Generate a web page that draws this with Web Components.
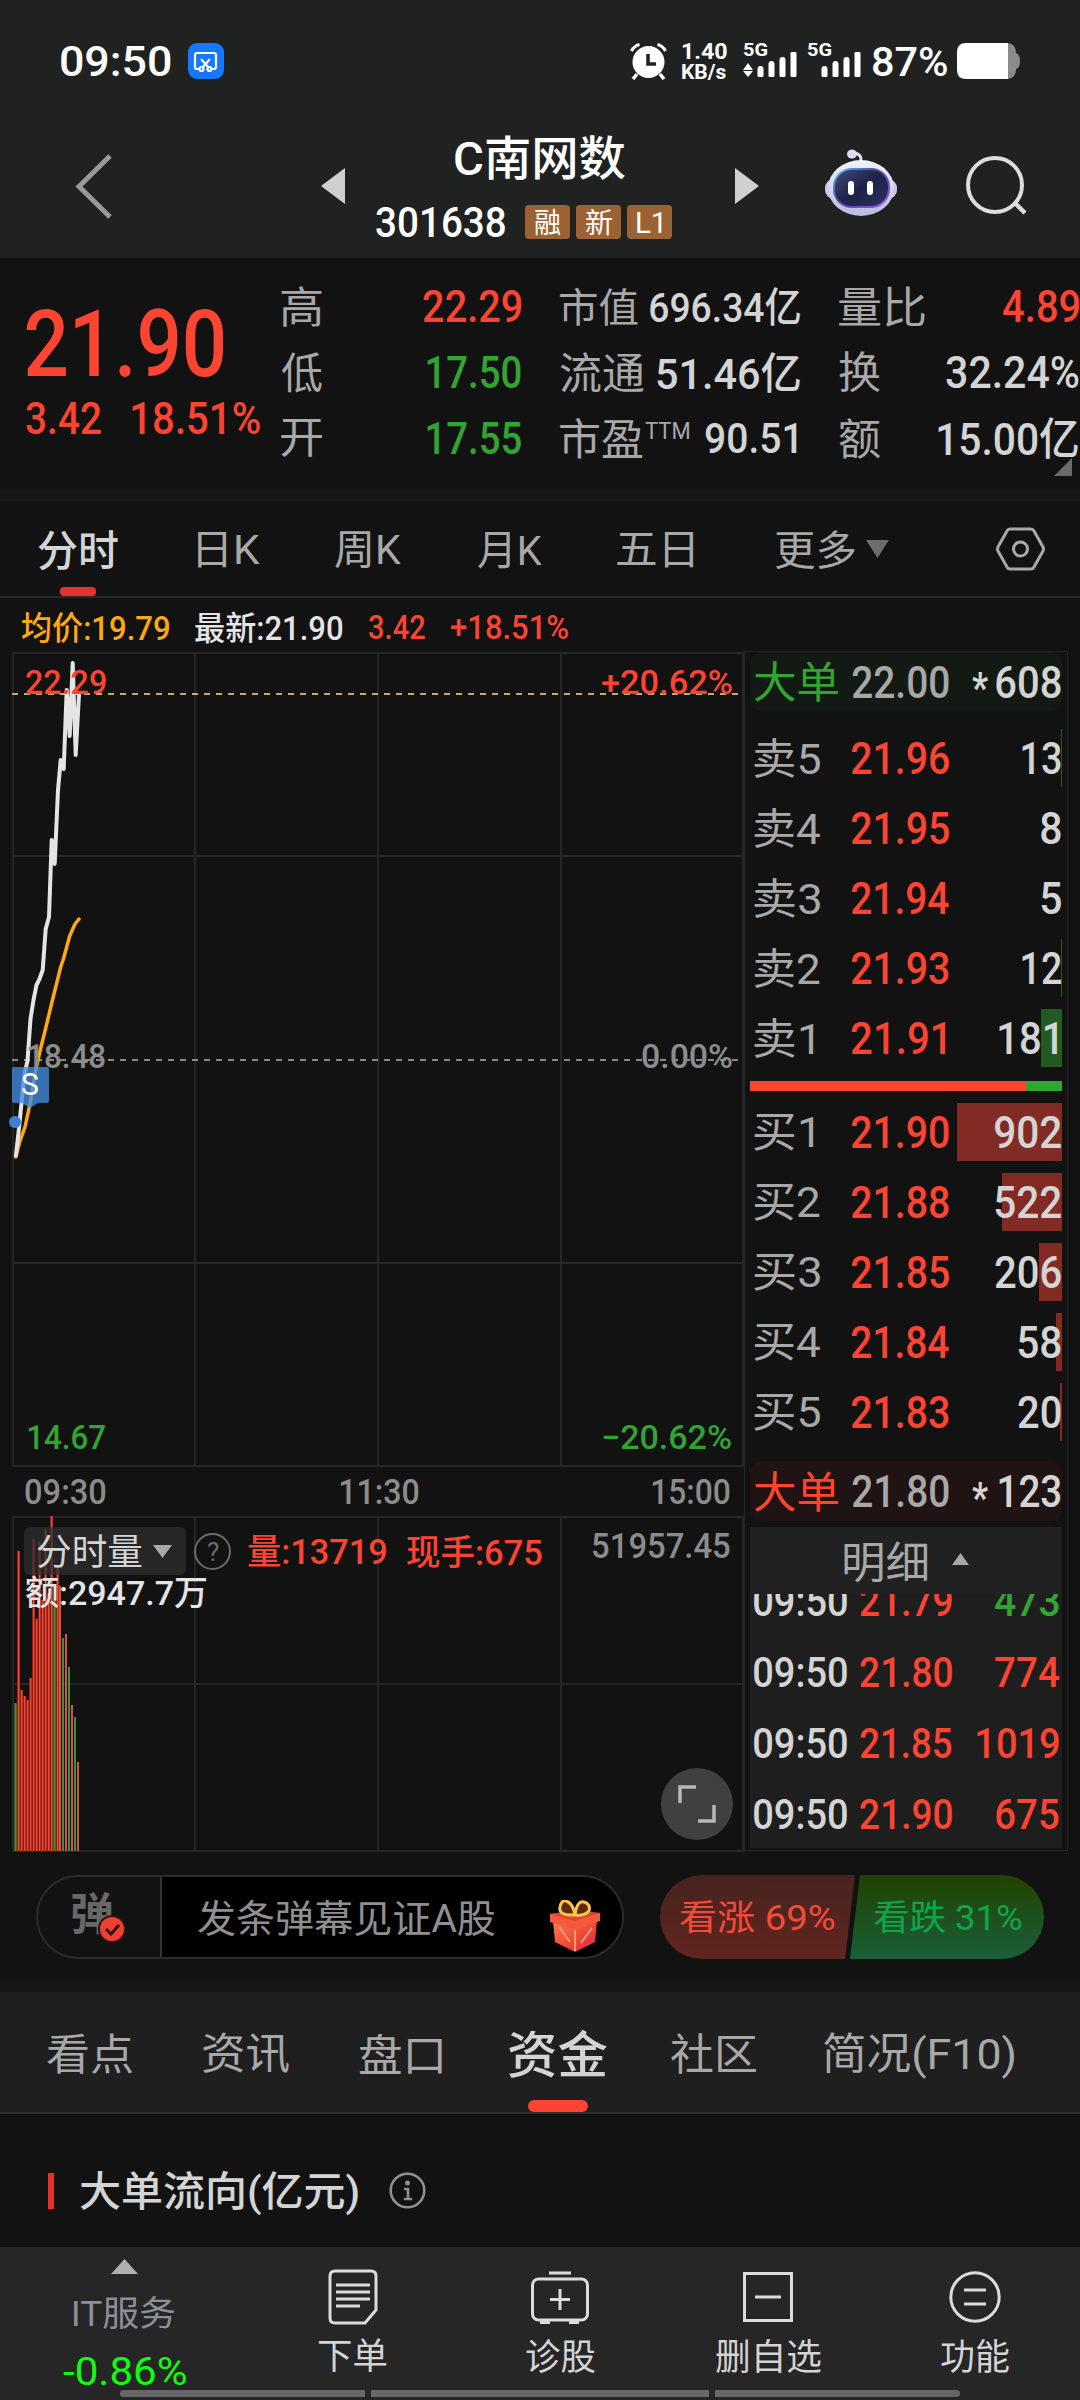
<!DOCTYPE html>
<html lang="zh-CN">
<head>
<meta charset="utf-8">
<title>C南网数 301638</title>
<style>
body {
	margin: 0;
	width: 1080px;
	height: 2400px;
	overflow: hidden;
	background: #121212;
	font-family: Roboto, "Noto Sans CJK SC", sans-serif;
	--red: #fc4432;
	--green: #32a432;
	--grey: #a8a8a8;
	--light: #d4d4d4;
}
</style>
</head>
<body>
<stock-page></stock-page>

<script>
const FONT = 'Roboto, "Noto Sans CJK SC", sans-serif'
const pen = document.createElement('canvas').getContext('2d')

// Shorthand for a fit-text tag: text, ink width, font size, colour, weight, extra style
const t = (text, w, size, color = 'var(--light)', weight = 400, css = '') =>
	`<fit-text text="${text}" w="${w}" size="${size}" weight="${weight}" style="color:${color};${css}"></fit-text>`

const define = (name, html) => {
	customElements.define(name, class extends HTMLElement {
		constructor() {
			super()
			this.attachShadow({mode: 'open'})
			const template = document.createElement('template')
			template.innerHTML = html
			this.shadowRoot.appendChild(template.content.cloneNode(true))
		}
	})
}

// A line of text condensed to an exact width; its box is the ink of the glyphs
class FitText extends HTMLElement {
	constructor() {
		super()
		this.attachShadow({mode: 'open'})
	}

	connectedCallback() {
		const text = this.getAttribute('text')
		const w = +this.getAttribute('w')
		const size = +this.getAttribute('size')
		const weight = this.getAttribute('weight')
		pen.font = `${weight} ${size}px ${FONT}`
		const m = pen.measureText(text)
		const left = -m.actualBoundingBoxLeft
		const inkW = m.actualBoundingBoxRight - left
		const inkH = m.actualBoundingBoxAscent + m.actualBoundingBoxDescent
		this.shadowRoot.innerHTML = `
		<style>
		:host { display: block; flex: none; width: ${w}px; height: ${inkH}px; }
		svg { display: block; overflow: visible; }
		text { font: ${weight} ${size}px ${FONT}; fill: currentColor; white-space: pre; }
		</style>
		<svg width="${w}" height="${inkH}" viewBox="${left} ${-m.actualBoundingBoxAscent} ${inkW} ${inkH}" preserveAspectRatio="none"><text></text></svg>`
		this.shadowRoot.querySelector('text').textContent = text
	}
}
customElements.define('fit-text', FitText)

define('status-bar', `
<style>
:host { display: flex; height: 123px; box-sizing: border-box; padding: 43px 60px 0 61px; }
.left, .right { display: flex; height: 36px; align-items: center; }
.left { gap: 17px; flex: 1; }
.net { display: flex; flex-direction: column; gap: 5px; margin: 0 16px 0 15px; }
.sig { display: flex; flex-direction: column; height: 36px; margin-right: 10px; }
svg { display: block; flex: none; }
</style>
<div class="left">
	${t('09:50', 110, 43, '#fff', 500)}
	<svg width="36" height="36"><rect width="36" height="36" rx="9" fill="#1677ff"/>
		<g fill="none" stroke="#fff" stroke-width="2.2"><path d="M12 26H9q-2 0-2-2V12q0-2 2-2h17q2 0 2 2v12q0 2-2 2h-2"/><path d="M13 16l8 9M22 16l-8 9"/><circle cx="13.500" cy="26" r="2"/><circle cx="21.500" cy="26" r="2"/></g></svg>
</div>
<div class="right">
	<svg width="37" height="37" viewBox="0 0 37 37"><circle cx="18.500" cy="19" r="16" fill="#fff"/><path d="M1.500 8Q4 3 9.500 1.500M35.500 8Q33 3 27.500 1.500" stroke="#fff" stroke-width="3" fill="none"/><path d="M7 31l-4 5M30 31l4 5" stroke="#fff" stroke-width="3.500"/><path d="M18 11v10h8" fill="none" stroke="#1f2221" stroke-width="3.500"/></svg>
	<div class="net">${t('1.40', 45, 22, '#fff', 700)}${t('KB/s', 44, 20, '#fff', 700)}</div>
	<div class="sig">
		${t('5G', 24, 19, '#fff', 700)}
		<svg width="54" height="25" style="margin-top:-4px"><path d="M0 18l5-7 5 7zM0 19h10l-5 6z" fill="#fff"/><path d="M17.500 17v6M28.500 12v11M39.500 8v15M50.500 2v21" stroke="#fff" stroke-width="6" stroke-linecap="round"/></svg>
	</div>
	<div class="sig">
		${t('5G', 24, 19, '#fff', 700)}
		<svg width="56" height="25" style="margin-top:-4px"><path d="M17.500 17v6M28.500 12v11M39.500 8v15M50.500 2v21" stroke="#fff" stroke-width="6" stroke-linecap="round"/></svg>
	</div>
	${t('87%', 74, 40, '#fff', 500)}
	<svg width="63" height="36" style="margin-left:10px"><path d="M9 0h42v36H9q-9 0-9-9V9q0-9 9-9z" fill="#fff"/><path d="M51 0q8 1 8 10q4 1 4 8t-4 8q0 9-8 10z" fill="#8b8b8b"/></svg>
</div>
`)

define('page-header', `
<style>
:host { display: flex; height: 135px; }
svg { display: block; flex: none; }
.title { width: 390px; display: flex; flex-direction: column; align-items: center; padding-top: 12px; }
.sub { display: flex; align-items: center; margin: 25px 32px 0 0; }
.tag { width: 45px; height: 34px; margin-left: 6px; border-radius: 4px; background: #9c6233; display: flex; align-items: center; justify-content: center; }
.tag:nth-of-type(1) { margin-left: 20px; }
</style>
<svg width="345" height="135"><path d="M110 33L79 63.500 110 94" fill="none" stroke="#999" stroke-width="5"/><path d="M345 45v36l-24-18z" fill="#d0d0d0"/></svg>
<div class="title">
	${t('C南网数', 170, 47, '#fff', 500)}
	<div class="sub">
		${t('301638', 129, 42, '#fff', 500)}
		<div class="tag">${t('融', 26, 28, '#fff')}</div>
		<div class="tag">${t('新', 26, 28, '#fff')}</div>
		<div class="tag">${t('L1', 25, 29, '#fff')}</div>
	</div>
</div>
<svg width="345" height="135">
	<defs>
		<linearGradient id="shell" x2="0" y2="1"><stop offset="0" stop-color="#f4f4fa"/><stop offset="1" stop-color="#b9b9e2"/></linearGradient>
		<linearGradient id="rim" x2="1" y2="1"><stop offset="0" stop-color="#5ab8f0"/><stop offset=".45" stop-color="#4a4690"/><stop offset="1" stop-color="#9a58f0"/></linearGradient>
		<linearGradient id="face" x2="1" y2="1"><stop offset="0" stop-color="#454c7c"/><stop offset=".5" stop-color="#1d2248"/><stop offset="1" stop-color="#2c3160"/></linearGradient>
	</defs>
	<path d="M0 45v36l24-18z" fill="#d0d0d0"/>
	<path d="M126 38Q127 31 119 30" fill="none" stroke="#e8e8f4" stroke-width="3"/><ellipse cx="117" cy="31" rx="5" ry="4.500" fill="#dcdcf4"/>
	<rect x="90" y="56" width="72" height="20" rx="9" fill="#c9c9ee"/>
	<ellipse cx="126" cy="65" rx="33" ry="28" fill="url(#shell)"/>
	<rect x="99" y="46" width="55" height="38" rx="18" fill="url(#face)" stroke="url(#rim)" stroke-width="2"/>
	<rect x="113" y="58" width="6" height="14" rx="3" fill="#fff"/><rect x="132" y="58" width="6" height="14" rx="3" fill="#fff"/>
	<circle cx="260" cy="62" r="27" fill="none" stroke="#ddd" stroke-width="4"/><path d="M280 80l10 10" stroke="#ddd" stroke-width="4.500"/>
</svg>
`)

define('stat-cell', `
<style>
:host { display: flex; align-items: center; justify-content: space-between; }
</style>
<slot></slot>
`)

define('quote-panel', `
<style>
:host { display: flex; position: relative; height: 231px; border-bottom: 12px solid #171717; }
.price { width: 281px; box-sizing: border-box; padding: 50px 0 0 26px; }
.change { display: flex; gap: 31px; margin-top: 25px; }
.stats { display: grid; grid-template-columns: 240px 240px 241px; column-gap: 39px; grid-auto-rows: 66px; padding-top: 15px; }
.pe { display: flex; align-items: flex-start; gap: 2px; }
.corner { position: absolute; left: 1054px; top: 200px; }
</style>
<div class="price">
	${t('21.90', 198, 93, 'var(--red)', 500)}
	<div class="change">${t('3.42', 75, 44, 'var(--red)', 500)}${t('18.51%', 128, 44, 'var(--red)', 500)}</div>
</div>
<div class="stats">
	<stat-cell>${t('高', 41, 43, 'var(--grey)')}${t('22.29', 98, 45, 'var(--red)', 500)}</stat-cell>
	<stat-cell>${t('市值', 78, 40, 'var(--grey)')}${t('696.34亿', 150, 41, 'var(--light)', 500)}</stat-cell>
	<stat-cell>${t('量比', 86, 43, 'var(--grey)')}${t('4.89', 76, 45, 'var(--red)', 500, 'margin-right:1px')}</stat-cell>
	<stat-cell>${t('低', 41, 43, 'var(--grey)')}${t('17.50', 94, 45, 'var(--green)', 500)}</stat-cell>
	<stat-cell>${t('流通', 84, 43, 'var(--grey)')}${t('51.46亿', 143, 43, 'var(--light)', 500)}</stat-cell>
	<stat-cell>${t('换', 41, 43, 'var(--grey)')}${t('32.24%', 133, 45, 'var(--light)', 500, 'margin-right:1px')}</stat-cell>
	<stat-cell>${t('开', 41, 43, 'var(--grey)')}${t('17.55', 94, 45, 'var(--green)', 500)}</stat-cell>
	<stat-cell><div class="pe">${t('市盈', 83, 43, 'var(--grey)')}${t('TTM', 44, 24, 'var(--grey)', 400, 'margin-top:5px')}</div>${t('90.51', 92, 43, 'var(--light)', 500, 'margin-right:3px')}</stat-cell>
	<stat-cell>${t('额', 41, 43, 'var(--grey)')}${t('15.00亿', 140, 44, 'var(--light)', 500, 'margin-right:2px')}</stat-cell>
</div>
<svg class="corner" width="18" height="18"><path d="M18 0v18H0z" fill="#6a6a6a"/></svg>
`)

define('chart-tabs', `
<style>
:host { display: flex; position: relative; align-items: center; height: 95px; padding-left: 38px; border-bottom: 2px solid #2a2a2a; }
:host fit-text { margin-top: 3px; }
svg { display: block; flex: none; }
i { position: absolute; left: 60px; bottom: 0; width: 36px; height: 9px; border-radius: 4px; background: #e93030; }
</style>
${t('分时', 80, 42, 'var(--light)', 500)}
${t('日K', 62, 41, 'var(--grey)', 400, 'margin-left:80px')}
${t('周K', 66, 41, 'var(--grey)', 400, 'margin-left:75px')}
${t('月K', 64, 41, 'var(--grey)', 400, 'margin-left:77px')}
${t('五日', 77, 41, 'var(--grey)', 400, 'margin-left:75px')}
${t('更多', 80, 41, 'var(--grey)', 400, 'margin-left:81px')}
<svg width="23" height="18" style="margin-left:11px"><path d="M0 0h23L11.500 18z" fill="#6c6c6c"/></svg>
<svg width="50" height="46" style="margin-left:107px"><path d="M14 3h21q2 0 3 2l9 16q1 2 0 4l-9 16q-1 2-3 2H14q-2 0-3-2L2 25q-1-2 0-4L11 5q1-2 3-2z" fill="none" stroke="#a8a8a8" stroke-width="3"/><circle cx="24.500" cy="23" r="7" fill="none" stroke="#a8a8a8" stroke-width="3"/></svg>
<i></i>
`)

define('chart-info', `
<style>
:host { display: flex; align-items: center; gap: 26px; height: 54px; padding: 4px 0 0 22px; box-sizing: border-box; }
</style>
${t('均价:19.79', 147, 33, '#ffa912', 500)}
${t('最新:21.90', 148, 33, '#e4e4e4', 500)}
${t('3.42', 56, 33, 'var(--red)', 500)}
${t('+18.51%', 117, 33, 'var(--red)', 500)}
`)

const GRID = '#262626'
// minute-by-minute coordinates inside the price pane
const PRICE = '15.7,505 18.7,479 21.7,449 24.500,422 27.500,409 30.500,367 33.500,348 36.500,333 39.500,327 42.700,318 45.700,277 49,265 51.700,188 54.700,212 58,138 60.700,108 63.700,117 66.700,38 69.700,84 72.700,11 75.700,103 79,42'
const AVERAGE = '15.7,505 20,489 25,475 30,452 36,417 40,399 46,375 52,350 60.700,315 63.700,306 69.700,284 75,272 79,267'

define('price-chart', `
<style>
:host { display: block; position: relative; height: 815px; }
svg { display: block; }
fit-text { position: absolute; }
</style>
<svg width="744" height="815">
	<path d="M12 1h732M12 204h732M12 611h732M12 814h732M13 0v815M195 0v815M378 0v815M561 0v815M743 0v815" stroke="${GRID}" stroke-width="2" fill="none"/>
	<path d="M12 42h732" stroke="#c8ac78" stroke-width="2" stroke-dasharray="6 6"/>
	<path d="M12 408h732" stroke="#8a8a8a" stroke-width="2" stroke-dasharray="6 6"/>
	<polyline points="${AVERAGE}" fill="none" stroke="#ffa912" stroke-width="3.500" stroke-linejoin="round" stroke-linecap="round"/>
	<polyline points="${PRICE}" fill="none" stroke="#e4e4e4" stroke-width="4" stroke-linejoin="round"/>
	<path d="M14 415h33q2 0 2 2v32q0 2-2 2h-9l-8 5-8-5h-8q-2 0-2-2v-32q0-2 2-2z" fill="#438ce0" fill-opacity=".78"/>
	<circle cx="15" cy="470" r="6" fill="#4080d0"/>
</svg>
${t('22.29', 80, 34, 'var(--red)', 500, 'left:26px;top:18px')}
${t('+20.62%', 130, 34, 'var(--red)', 500, 'left:602px;top:18px')}
${t('18.48', 77, 34, '#8c8c8c', 500, 'left:28px;top:392px')}
${t('0.00%', 90, 34, '#8c8c8c', 500, 'left:642px;top:392px')}
${t('14.67', 77, 34, 'var(--green)', 500, 'left:28px;top:773px')}
${t('−20.62%', 128, 34, 'var(--green)', 500, 'left:603px;top:773px')}
${t('S', 16, 32, '#fff', 400, 'left:22px;top:421px')}
`)

define('time-axis', `
<style>
:host { display: flex; align-items: center; justify-content: space-between; height: 49px; padding: 0 14px 0 25px; }
</style>
${t('09:30', 81, 35, '#8c8c8c', 500)}${t('11:30', 79, 35, '#8c8c8c', 500)}${t('15:00', 78, 35, '#8c8c8c', 500)}
`)

// [top, falling] for each minute; bars stand on y = 335
const VOLUMES = [[187, 1], [35], [174], [180], [184], [162], [23], [103], [26], [84], [13], [77], [0], [84, 1], [52], [70], [122, 1], [118], [151, 1], [189], [201, 1], [246]]
const bars = VOLUMES.map(([top, down], i) => {
	const x = 14 + i * 3
	const edge = i < 15 ? `<rect x="${x}" y="${top}" width="3" height="${335 - top}" fill="${down ? '#1f6a1c' : '#9c1810'}"/>` : ''
	return `${edge}<rect x="${x + (i < 15 ? 1 : 0)}" y="${top}" width="${i < 15 ? 1.4 : 2}" height="${335 - top}" fill="${down ? '#3f9038' : '#dc523e'}"/>`
}).join('')

define('volume-chart', `
<style>
:host { display: block; position: relative; height: 336px; }
svg { display: block; }
.bar { position: absolute; left: 24px; top: 11px; display: flex; align-items: center; height: 48px; }
.chip { display: flex; align-items: center; gap: 11px; width: 162px; height: 48px; box-sizing: border-box; padding-left: 13px; border-radius: 6px; background: rgba(46, 46, 46, .75); }
.help { width: 33px; height: 33px; margin: 0 17px 0 8px; border: 2px solid #6a6a6a; border-radius: 50%; display: flex; align-items: center; justify-content: center; }
.over { position: absolute; }
</style>
<svg width="744" height="336">
	<path d="M12 1h732M12 168h732M12 335h732M13 0v336M195 0v336M378 0v336M561 0v336M743 0v336" stroke="${GRID}" stroke-width="2" fill="none"/>
	${bars}
</svg>
<div class="bar">
	<div class="chip">${t('分时量', 105, 36)}<svg width="19" height="13"><path d="M0 0h19L9.500 13z" fill="#a8a8a8"/></svg></div>
	<div class="help">${t('?', 12, 26, '#6a6a6a')}</div>
	${t('量:13719', 138, 35, 'var(--red)', 500)}
	${t('现手:675', 135, 35, 'var(--red)', 500, 'margin-left:21px')}
</div>
${t('51957.45', 137, 35, '#8c8c8c', 500, 'position:absolute;left:593px;top:17px')}
${t('额:2947.7万', 180, 34, '#e4e4e4', 500, 'position:absolute;left:26px;top:59px')}
<svg class="over" style="left:661px;top:252px" width="72" height="72"><circle cx="36" cy="36" r="36" fill="#404040"/><path d="M19 35V19h16M53 37v16H37" fill="none" stroke="#b8b8b8" stroke-width="3.500"/></svg>
`)

class BookRow extends HTMLElement {
	constructor() {
		super()
		this.attachShadow({mode: 'open'})
	}

	connectedCallback() {
		const [label, price, size, depth] = this.getAttribute('data').split(',')
		const sell = label[0] === '卖'
		const endsInOne = size.endsWith('1')
		// digit 1 is drawn narrower than the others
		const width = [...size].reduce((sum, c) => sum + (c === '1' ? 19 : 23), -3)
		this.shadowRoot.innerHTML = `
		<style>
		:host { display: flex; align-items: center; height: 58px; padding: 0 1px 0 4px;
			background: linear-gradient(${sell ? '#235a23' : '#822a24'} 0 0) right / ${depth}px 100% no-repeat; }
		.size { margin: 0 ${endsInOne ? 4 : 0}px 0 auto; }
		</style>
		${t(label, label[1] === '1' ? 59 : 66, 42, 'var(--grey)', 400, `margin-right:${label[1] === '1' ? 38 : 31}px`)}
		${t(price, price === '21.91' ? 94 : 98, 45, 'var(--red)', 500)}
		<div class="size">${t(size, width, 45, 'var(--light)', 500)}</div>`
	}
}
customElements.define('book-row', BookRow)

define('big-order', `
<style>
:host { display: flex; align-items: center; height: 59px; padding: 0 1px 0 4px; border-radius: 12px; }
::slotted(:last-child) { margin-left: auto; }
</style>
<slot></slot>
`)

define('trade-row', `
<style>
:host { display: flex; align-items: center; height: 71px; gap: 13px; padding: 0 3px 0 4px; }
::slotted(:last-child) { margin-left: auto; }
</style>
<slot></slot>
`)

const SELLS = ['卖5,21.96,13,1', '卖4,21.95,8,0', '卖3,21.94,5,0', '卖2,21.93,12,1', '卖1,21.91,181,21']
const BUYS = ['买1,21.90,902,105', '买2,21.88,522,60', '买3,21.85,206,23', '买4,21.84,58,6', '买5,21.83,20,2']
const TRADES = [['21.79', '473', 64, 'green'], ['21.80', '774', 64, 'red'], ['21.85', '1019', 82, 'red'], ['21.90', '675', 63, 'red']]
const rows = (list) => list.map((x) => `<book-row data="${x}"></book-row>`).join('')

define('order-book', `
<style>
:host { display: block; width: 312px; height: 1198px; padding: 0 5px; border: 1px solid #262626; margin-top: -1px; }
.side { display: flex; flex-direction: column; gap: 12px; }
.ratio { display: flex; height: 10px; margin: 14px 0 12px; background: var(--green); }
.ratio i { width: 276px; background: var(--red); }
.head { display: flex; align-items: center; justify-content: center; gap: 25px; height: 67px; margin-top: 6px; background: #212121; }
.head svg { margin-bottom: 3px; }
.list { height: 254px; overflow: hidden; background: #1e1e1e; }
.list trade-row:first-child { margin-top: -29px; }
</style>
<big-order style="background:#131a14">${t('大单', 84, 43, 'var(--green)')}${t('22.00', 97, 45, 'var(--grey)', 500, 'margin-left:14px')}${t('*', 16, 42, 'var(--light)', 700, 'margin-left:23px')}${t('608', 65, 45, 'var(--light)', 500)}</big-order>
<div class="side" style="margin-top:18px">${rows(SELLS)}</div>
<div class="ratio"><i></i></div>
<div class="side">${rows(BUYS)}</div>
<big-order style="background:#1f1413;margin-top:20px;height:60px">${t('大单', 84, 43, 'var(--red)')}${t('21.80', 97, 45, 'var(--grey)', 500, 'margin-left:14px')}${t('*', 16, 42, 'var(--light)', 700, 'margin-left:23px')}${t('123', 62, 45, 'var(--light)', 500)}</big-order>
<div class="head">${t('明细', 83, 43, 'var(--grey)', 400, 'margin-top:3px')}<svg width="17" height="12"><path d="M8.500 0L17 12H0z" fill="#a8a8a8"/></svg></div>
<div class="list">
	${TRADES.map(([price, size, w, c]) => `<trade-row>${t('09:50', 93, 42, 'var(--light)', 500)}${t(price, 92, 42, 'var(--red)', 500)}${t(size, w, 42, `var(--${c})`, 500)}</trade-row>`).join('')}
</div>
`)

define('comment-bar', `
<style>
:host { display: flex; justify-content: space-between; height: 130px; box-sizing: border-box; padding: 25px 36px 0; }
.pill { display: flex; width: 588px; height: 84px; box-sizing: border-box; border: 2px solid #2c2c2c; border-radius: 42px; overflow: hidden; }
.toggle { position: relative; width: 124px; padding: 14px 0 0 34px; box-sizing: border-box; border-right: 2px solid #333; }
.toggle svg { position: absolute; left: 60px; top: 38px; }
.input { flex: 1; display: flex; align-items: center; gap: 55px; padding-left: 36px; background: #000; }
.input svg { margin-top: 17px; }
.vote { position: relative; display: flex; align-items: center; justify-content: space-between; width: 384px; height: 84px; padding: 0 22px 0 20px; box-sizing: border-box; border-radius: 42px; overflow: hidden; isolation: isolate; }
.vote > svg { position: absolute; inset: 0; z-index: -1; }
</style>
<div class="pill">
	<div class="toggle">${t('弹', 41, 44, '#686868', 700)}
		<svg width="28" height="28"><circle cx="14" cy="14" r="13" fill="#f04034" stroke="#2a1615" stroke-width="2"/><path d="M8 14l5 5 8-9" fill="none" stroke="#301010" stroke-width="3"/></svg>
	</div>
	<div class="input">${t('发条弹幕见证A股', 297, 38, '#909090', 400, 'margin-top:2px')}
		<svg width="50" height="52" viewBox="0 0 50 52">
			<defs><linearGradient id="box" x2="1" y2="1"><stop offset="0" stop-color="#ff7c50"/><stop offset=".6" stop-color="#ee4434"/><stop offset="1" stop-color="#d8206c"/></linearGradient></defs>
			<path d="M3 21l22 7 22-8-2 22-20 10L5 42z" fill="url(#box)"/>
			<path d="M0 14l25-3 25 2v8l-25 9L0 22z" fill="#f35a3d"/><path d="M0 14l25-3 25 2-25 8z" fill="#e04630"/>
			<path d="M25 30v21M9 27l11 15M42 28L31 43" stroke="#ff9c72" stroke-width="2" fill="none"/>
			<path d="M25 15Q8 16 10 7t8-5q5 2 7 13Q27 0 34 2t5 9q-4 5-14 4z" fill="#5c2a05" stroke="#ffc24a" stroke-width="3"/>
		</svg>
	</div>
</div>
<div class="vote">
	<svg width="384" height="84"><defs><linearGradient id="up" x2="0" y2="1"><stop offset="0" stop-color="#46231f"/><stop offset="1" stop-color="#62251f"/></linearGradient><linearGradient id="down" x2="0" y2="1"><stop offset="0" stop-color="#214200"/><stop offset="1" stop-color="#1a5f3a"/></linearGradient></defs><path d="M0 0h195l-10 84H0z" fill="url(#up)"/><path d="M200 0h184v84H190z" fill="url(#down)"/></svg>
	${t('看涨 69%', 155, 35, '#f34a3b')}
	${t('看跌 31%', 148, 35, '#10a54b')}
</div>
`)

define('section-tabs', `
<style>
:host { display: flex; position: relative; align-items: center; height: 132px; box-sizing: border-box; padding-left: 47px; border-top: 12px solid #171717; background: #1f1f1f; box-shadow: 0 2px #303030; }
:host fit-text { margin-top: 2px; }
i { position: absolute; left: 528px; bottom: 0; width: 60px; height: 12px; border-radius: 6px; background: var(--red); }
</style>
${t('看点', 85, 43, 'var(--grey)')}
${t('资讯', 86, 43, 'var(--grey)', 400, 'margin-left:71px')}
${t('盘口', 83, 43, 'var(--grey)', 400, 'margin-left:70px')}
${t('资金', 98, 50, 'var(--light)', 500, 'margin-left:67px')}
${t('社区', 85, 43, 'var(--grey)', 400, 'margin-left:64px')}
${t('简况(F10)', 190, 43, 'var(--grey)', 400, 'margin:6px 0 0 68px')}
<i></i>
`)

define('section-title', `
<style>
:host { display: flex; align-items: center; height: 135px; padding: 23px 0 0 48px; box-sizing: border-box; }
i { width: 6px; height: 36px; margin: 0 26px 1px 0; background: #e93030; }
svg { display: block; margin: 0 0 1px 31px; }
</style>
<i></i>
${t('大单流向(亿元)', 278, 41, 'var(--light)', 500, 'margin-top:4px')}
<svg width="37" height="37"><g fill="none" stroke="#909090" stroke-width="2.600"><circle cx="18.500" cy="18.500" r="16.800"/><path d="M15 17h4v10M15 27h8"/></g><circle cx="18.500" cy="11" r="2.500" fill="#909090"/></svg>
`)

define('tool-item', `
<style>
:host { display: flex; flex-direction: column; align-items: center; height: 143px; }
.icon { display: flex; flex: none; height: 56px; align-items: center; margin: 22px 0 13px; }
</style>
<div class="icon"><slot name="icon"></slot></div>
<slot></slot>
`)

define('bottom-bar', `
<style>
:host { display: block; height: 153px; background: #262626; }
.tools { display: grid; grid-template-columns: 249px 207px 208px 208px 206px; height: 143px; }
.index { display: flex; flex-direction: column; align-items: center; padding-top: 12px; }
.home { display: flex; gap: 6px; width: 840px; height: 7px; margin-left: 120px; }
.home i { flex: 245; background: #666; border-radius: 4px 0 0 4px; }
.home i:nth-child(2) { flex: 338; border-radius: 0; }
.home i:nth-child(3) { border-radius: 0 4px 4px 0; }
svg { display: block; fill: none; stroke: #dcdcdc; stroke-width: 3; }
</style>
<div class="tools">
	<div class="index">
		<svg width="27" height="15"><path d="M13.500 0L27 15H0z" fill="#b0b0b0" stroke="none"/></svg>
		${t('IT服务', 101, 35, '#8e8e98', 400, 'margin-top:21px')}
		${t('-0.86%', 123, 39, '#10fc10', 400, 'margin-top:27px')}
	</div>
	<tool-item><svg slot="icon" width="50" height="56"><path d="M7 2h36q5 0 5 5v34L37 54H7q-5 0-5-5V7q0-5 5-5z"/><path d="M8 16h34M8 23h34M8 30h34M8 37h24"/></svg>${t('下单', 69, 36)}</tool-item>
	<tool-item><svg slot="icon" width="58" height="56"><rect x="1.500" y="10" width="55" height="41" rx="6"/><path d="M18 4h22M9 53.500h10M38 53.500h10M29 20v21M19 30.500h20"/></svg>${t('诊股', 69, 36)}</tool-item>
	<tool-item><svg slot="icon" width="50" height="50"><rect x="1.500" y="1.500" width="47" height="47"/><path d="M12 25h26"/></svg>${t('删自选', 105, 36)}</tool-item>
	<tool-item><svg slot="icon" width="52" height="52"><circle cx="26" cy="26" r="24.200"/><path d="M15 19h22M15 33h22"/></svg>${t('功能', 68, 36)}</tool-item>
</div>
<div class="home"><i></i><i></i><i></i></div>
`)

define('stock-page', `
<style>
:host { display: flex; flex-direction: column; width: 1080px; height: 2400px; overflow: hidden; }
header { height: 258px; background: #1f2221; }
main { display: flex; height: 1198px; }
.charts { width: 744px; }
</style>
<header><status-bar></status-bar><page-header></page-header></header>
<quote-panel></quote-panel>
<chart-tabs></chart-tabs>
<chart-info></chart-info>
<main>
	<div class="charts"><price-chart></price-chart><time-axis></time-axis><volume-chart></volume-chart></div>
	<order-book></order-book>
</main>
<comment-bar></comment-bar>
<section-tabs></section-tabs>
<section-title></section-title>
<bottom-bar></bottom-bar>
`)
</script>
</body>
</html>
